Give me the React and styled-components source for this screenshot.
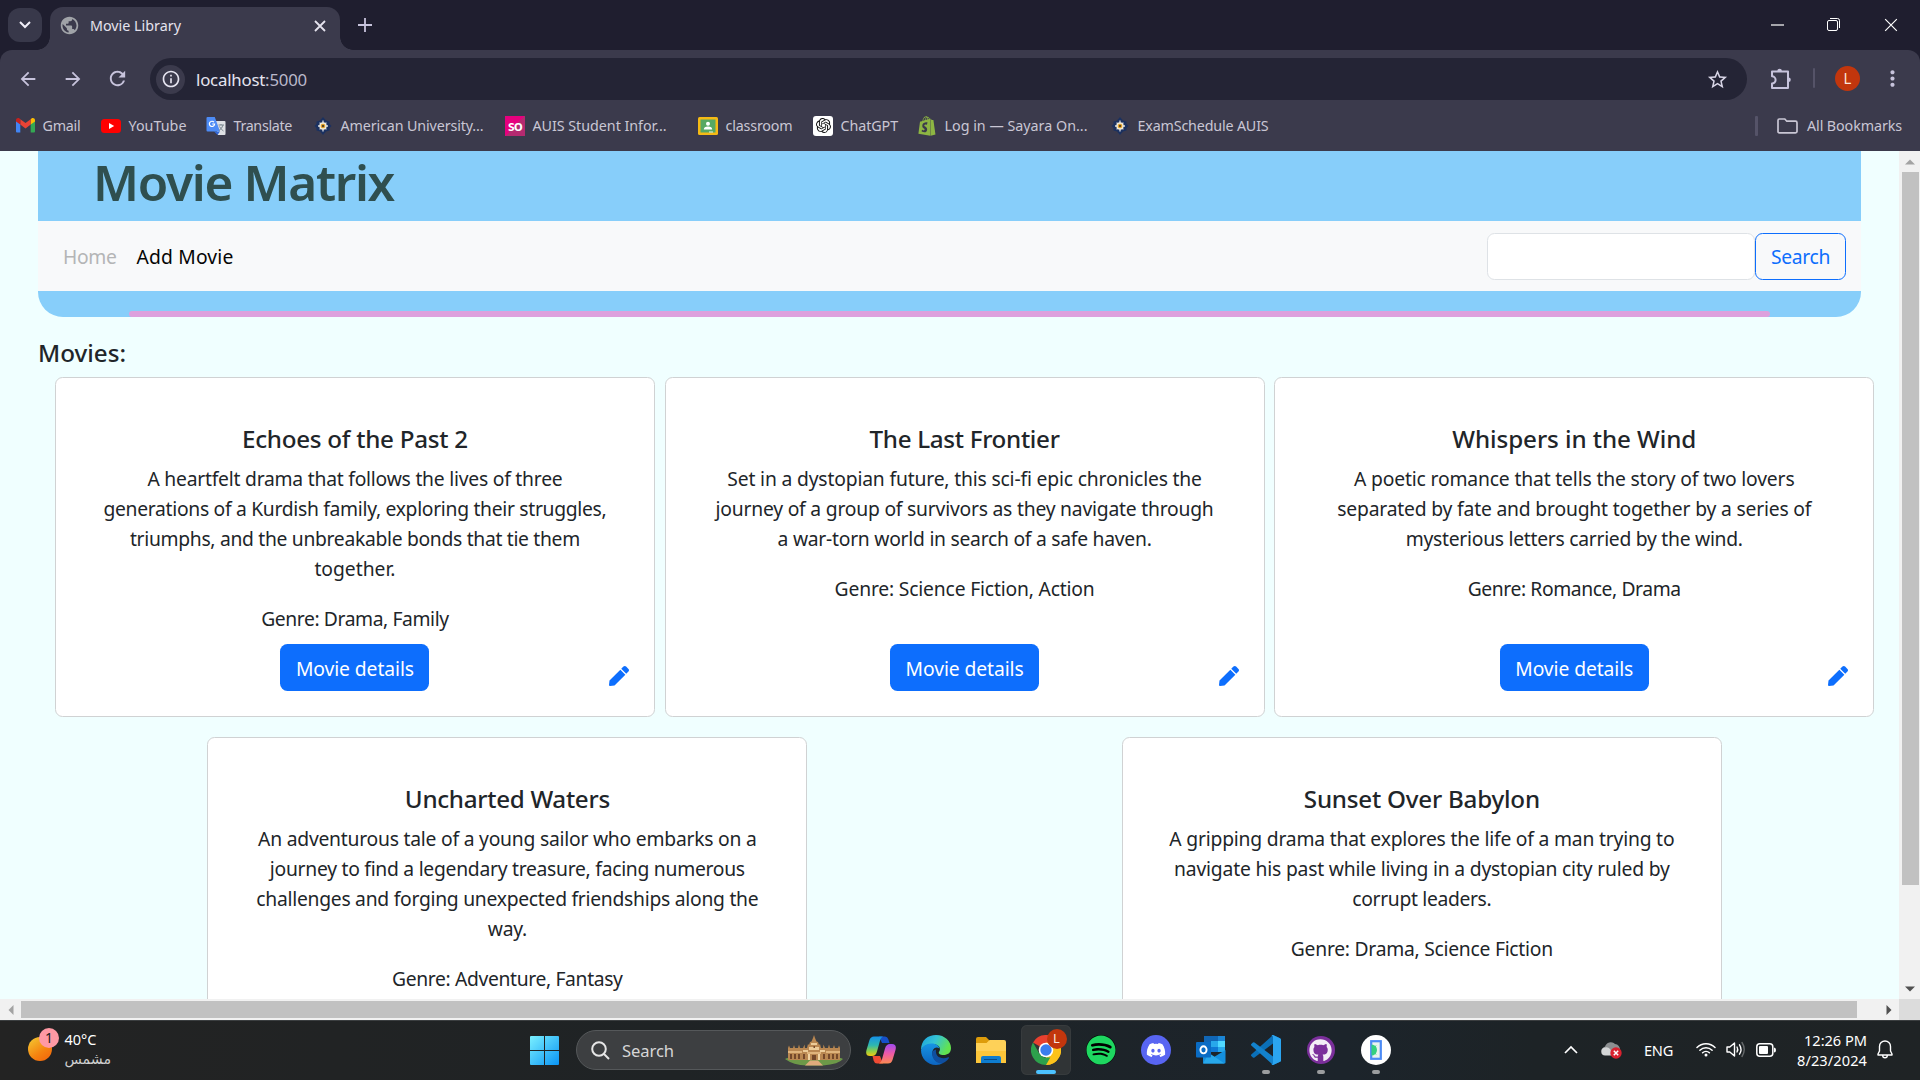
import React, { useLayoutEffect, useRef, useState } from 'react';
import styled, { createGlobalStyle } from 'styled-components';
import { FaPen, FaSpotify, FaDiscord, FaGithub, FaShopify } from 'react-icons/fa';
import { SiOpenai } from 'react-icons/si';
import {
  MdPublic, MdStarBorder, MdRefresh, MdArrowBack, MdArrowForward,
  MdInfoOutline, MdMoreVert,
} from 'react-icons/md';

const GlobalStyle = createGlobalStyle`
  *, *::before, *::after { box-sizing: border-box; }
  body { margin: 0; overflow: hidden; font-family: "Noto Sans", "Open Sans", sans-serif; }
  svg { display: block; flex: none; }
`;

/* Text tracked so that it spans a given width in pixels. */
const Tracked = styled.span`
  white-space: pre;
`;

function Text({ width, children }) {
  const ref = useRef(null);
  const [spacing, setSpacing] = useState(0);
  useLayoutEffect(() => {
    const el = ref.current;
    const range = document.createRange();
    range.selectNodeContents(el);
    el.style.letterSpacing = '0px';
    const natural = range.getBoundingClientRect().width;
    const next = (width - natural) / el.textContent.length;
    el.style.letterSpacing = `${next}px`;
    setSpacing(next);
  }, [width]);
  return <Tracked ref={ref} style={{ letterSpacing: `${spacing}px` }}>{children}</Tracked>;
}

const Screen = styled.div`
  display: flex;
  flex-direction: column;
  width: 1920px;
  height: 1080px;
  overflow: hidden;
`;

/* ---------- browser chrome ---------- */
const TabStrip = styled.div`
  display: flex;
  height: 50px;
  background: #1f1e2f;
`;
const TabSearch = styled.div`
  display: grid;
  place-items: center;
  width: 34px;
  height: 34px;
  margin: 8px 8px 0;
  border-radius: 12px;
  background: #38384a;
`;
const Tab = styled.div`
  position: relative;
  display: flex;
  align-items: center;
  width: 290px;
  height: 43px;
  margin-top: 7px;
  padding: 0 14px 6px 9px;
  border-radius: 13px 13px 0 0;
  background: #3b3a4c;
  color: #e5e3ee;
  font-size: 14.3px;
  &::before, &::after {
    content: "";
    position: absolute;
    bottom: 0;
    width: 13px;
    height: 13px;
  }
  &::before { left: -13px; background: radial-gradient(circle at 0 0, transparent 12.5px, #3b3a4c 13px); }
  &::after { right: -13px; background: radial-gradient(circle at 100% 0, transparent 12.5px, #3b3a4c 13px); }
`;
const TabTitle = styled.div`
  flex: 1;
  margin-left: 10px;
`;
const NewTab = styled.div`
  display: grid;
  place-items: center;
  width: 36px;
  margin-left: 7px;
`;
const WindowButtons = styled.div`
  display: flex;
  margin: 0 1px 0 auto;
`;
const WindowButton = styled.div`
  display: grid;
  place-items: center;
  width: ${p => p.$w || 57}px;
  height: 49px;
`;
const ToolbarBack = styled.div`
  background: #1f1e2f;
`;
const Toolbar = styled.div`
  display: flex;
  align-items: flex-start;
  height: 50px;
  padding: 8px 5px 0;
  border-radius: 12px 12px 0 0;
  background: #3b3a4c;
  color: #c7c3dc;
`;
const ToolSlot = styled.div`
  display: grid;
  place-items: center;
  width: 45px;
  height: 41px;
`;
const AddressBar = styled.div`
  display: flex;
  align-items: center;
  width: 1597px;
  height: 42px;
  margin: 0 11px 0 10px;
  padding: 0 18px 0 6px;
  border-radius: 21px;
  background: #242435;
  color: #e6e4f0;
  font-size: 16.8px;
`;
const SiteInfo = styled.div`
  display: grid;
  place-items: center;
  width: 29px;
  height: 29px;
  margin-right: 11px;
  border-radius: 50%;
  background: #3b3a4c;
`;
const Address = styled.div`
  flex: 1;
`;
const Port = styled.span`
  color: #bab8ca;
`;
const Rule = styled.div`
  width: ${p => p.$w || 2}px;
  height: 20px;
  margin: ${p => p.$m};
  border-radius: 1px;
  background: #555368;
`;
const Avatar = styled.div`
  display: grid;
  place-items: center;
  width: ${p => p.$size}px;
  height: ${p => p.$size}px;
  border-radius: 50%;
  background: #c2360d;
  color: #fbe5dd;
  font: ${p => p.$font}px Roboto, sans-serif;
`;
const BookmarksBar = styled.div`
  display: flex;
  align-items: center;
  height: 51px;
  padding: 0 18px 0 15px;
  background: #3b3a4c;
  color: #c9c6d4;
  font-size: 14.3px;
`;
const Bookmark = styled.div`
  display: flex;
  align-items: center;
  width: ${p => p.$w}px;
  gap: 7.5px;
`;
const BookmarkIcon = styled.div`
  display: grid;
  place-items: center;
  width: 20px;
  height: 20px;
`;
const ChatTile = styled.div`
  display: grid;
  place-items: center;
  width: 20px;
  height: 20px;
  border-radius: 3px;
  background: #fff;
  color: #111;
`;
const SoTile = styled.div`
  width: 20px;
  height: 20px;
  background: linear-gradient(135deg, #e6007e 50%, #b52a70 50%);
  color: #fff;
  font: 700 15px/18px Lato, sans-serif;
  letter-spacing: -0.5px;
  text-align: center;
`;
const AllBookmarks = styled.div`
  display: flex;
  align-items: center;
  gap: 9px;
  margin-left: auto;
`;

/* ---------- page ---------- */
const Viewport = styled.div`
  display: grid;
  grid-template: 848px 21px / 1899px 21px;
`;
const Page = styled.main`
  height: 848px;
  overflow: hidden;
  background: #f0ffff;
  color: #212529;
`;
const Banner = styled.header`
  display: flex;
  flex-direction: column;
  width: 1823px;
  height: 166px;
  margin-left: 38px;
  border-radius: 0 0 25px 25px;
  background: #87cefa;
`;
const SiteTitle = styled.h1`
  height: 70px;
  margin: 0;
  padding-left: 55px;
  color: #2f4f4f;
  font-size: 49.5px;
  font-weight: 600;
  line-height: 63px;
`;
const Nav = styled.nav`
  display: flex;
  align-items: center;
  height: 70px;
  padding: 0 15px 0 25px;
  background: #f8f9fa;
  font-size: 19.3px;
`;
const NavLink = styled.div`
  width: ${p => p.$w}px;
  color: ${p => (p.$muted ? '#b4b5b6' : '#050505')};
`;
const SearchInput = styled.div`
  width: 268px;
  height: 47px;
  margin-left: auto;
  border: 1px solid #dee2e6;
  border-radius: 7.5px;
  background: #fff;
`;
const SearchButton = styled.div`
  width: 91px;
  height: 47px;
  border: 1px solid #0d6efd;
  border-radius: 7.5px;
  color: #0d6efd;
  line-height: 46px;
  text-align: center;
`;
const PlumLine = styled.div`
  width: 1641px;
  height: 6px;
  margin: auto 91px 0;
  border-radius: 3px;
  background: #dda0dd;
`;
const SectionTitle = styled.h5`
  margin: 21px 0 9px 38px;
  font-size: 24.2px;
  font-weight: 500;
  line-height: 30px;
`;
const CardGrid = styled.section`
  display: flex;
  flex-wrap: wrap;
  justify-content: space-around;
  gap: 20px 0;
  width: 1829px;
  margin-left: 50.1px;
`;
const Card = styled.article`
  display: flex;
  flex-direction: column;
  width: 600px;
  height: 340px;
  padding: 46px 25px 25px;
  border: 1px solid #d0d2d3;
  border-radius: 7.5px;
  background: #fff;
  text-align: center;
`;
const CardTitle = styled.h5`
  margin: 0 0 10px;
  font-size: 24.2px;
  font-weight: 500;
  line-height: 30px;
`;
const Copy = styled.p`
  margin: 0;
  font-size: 19.3px;
  line-height: 30px;
`;
const Genre = styled(Copy)`
  margin-top: 20px;
`;
const Line = styled.span`
  display: block;
`;
const CardFooter = styled.div`
  display: grid;
  grid-template-columns: 1fr 149px 1fr;
  margin-top: auto;
`;
const DetailsButton = styled.div`
  grid-column: 2;
  height: 47px;
  border-radius: 7.5px;
  background: #0d6efd;
  color: #fff;
  font-size: 19.3px;
  line-height: 49px;
`;
const EditLink = styled.div`
  align-self: end;
  justify-self: end;
  margin-bottom: 5px;
  color: #0d6efd;
`;

/* ---------- scrollbars ---------- */
const VScroll = styled.div`
  display: flex;
  flex-direction: column;
  align-items: center;
  padding-left: 1px;
  background: #f1f1f1;
`;
const VThumb = styled.div`
  width: 17px;
  height: 713px;
  margin-bottom: auto;
  background: #c1c1c1;
`;
const HScroll = styled.div`
  display: flex;
  align-items: center;
  background: #f1f1f1;
`;
const HThumb = styled.div`
  width: 1836px;
  height: 17px;
  margin-right: auto;
  background: #c1c1c1;
`;
const ArrowSlot = styled.div`
  display: grid;
  place-items: center;
  width: 21px;
  height: 21px;
`;
const Corner = styled.div`
  background: #dcdcdc;
`;

/* ---------- taskbar ---------- */
const Taskbar = styled.footer`
  display: flex;
  height: 60px;
  border-top: 1px solid #3b3e40;
  background: linear-gradient(90deg, #232323, #1f2325 35%, #1c242b 70%, #1d2326 80%, #1f2325);
  color: #fff;
  font-size: 14.5px;
`;
const Weather = styled.div`
  display: flex;
  width: 530px;
  padding: 6px 0 0 28px;
`;
const Sun = styled.div`
  position: relative;
  width: 24px;
  height: 24px;
  margin: 10px 12.5px 0 0;
  border-radius: 50%;
  background: linear-gradient(145deg, #f3c02e 10%, #f5820f 60%, #f2600c);
`;
const Badge = styled.div`
  position: absolute;
  left: 11px;
  top: -9px;
  width: 20px;
  height: 20px;
  border-radius: 50%;
  background: #ff99a4;
  color: #1c1c1c;
  font-size: 14px;
  line-height: 20px;
  text-align: center;
`;
const WeatherText = styled.div`
  line-height: 20px;
  padding-top: 2px;
`;
const WeatherNote = styled.div`
  color: #cfcfcf;
  font-family: "DejaVu Sans", sans-serif;
  font-size: 14.2px;
`;
const SearchBox = styled.div`
  display: flex;
  align-items: center;
  width: 275px;
  height: 40px;
  margin: 9px 2px 0 17px;
  padding: 0 7px 0 14px;
  border: 1px solid #55585a;
  border-radius: 20px;
  background: #3d3f41;
  color: #d6d6d6;
  font-size: 16.6px;
`;
const SearchLabel = styled.div`
  flex: 1;
  margin-left: 12px;
`;
const StartIcon = styled.div`
  padding-top: 15px;
`;
const AppButton = styled.div`
  position: relative;
  display: grid;
  place-items: center;
  width: 50px;
  height: 50px;
  margin: 4px 2.5px 0;
  border-radius: 6px;
  background: ${p => (p.$active ? '#303436' : 'transparent')};
  box-shadow: ${p => (p.$active ? 'inset 0 0 0 1px #373b3d' : 'none')};
  &::after {
    content: "";
    position: absolute;
    bottom: 1px;
    left: 50%;
    width: ${p => (p.$active ? 20 : p.$open ? 8 : 0)}px;
    height: 4px;
    border-radius: 2px;
    transform: translateX(-50%);
    background: ${p => (p.$active ? '#4cc2ff' : '#9b9d9f')};
  }
`;
const AppBadge = styled.div`
  position: absolute;
  right: 4px;
  top: 4px;
`;
const Disc = styled.div`
  display: grid;
  place-items: center;
  width: ${p => p.$size || 30}px;
  height: ${p => p.$size || 30}px;
  border-radius: 50%;
  background: ${p => p.$bg};
  color: ${p => p.$fg};
`;
const Tray = styled.div`
  display: flex;
  align-items: center;
  margin-left: auto;
  padding: 0 27px 2px 0;
  font-size: 14.6px;
`;
const TrayItem = styled.div`
  display: flex;
  width: ${p => p.$w}px;
`;
const Clock = styled.div`
  width: 91px;
  line-height: 20px;
  text-align: right;
`;
const BellSlot = styled.div`
  margin-left: 10px;
`;

/* ---------- drawings ---------- */
const Cross = ({ size, w = 1.4, color = '#fff' }) => (
  <svg width={size} height={size} viewBox="0 0 12 12" fill="none" stroke={color} strokeWidth={w}><path d="M1 1l10 10M11 1L1 11" /></svg>
);
const Arrow = ({ turn, color }) => (
  <svg width="10" height="10" viewBox="0 0 10 10"><path d="M0 7.5h10L5 2.5z" fill={color} transform={`rotate(${turn} 5 5)`} /></svg>
);
const Puzzle = () => (
  <svg width="22" height="22" viewBox="0 0 22 22" fill="none" stroke="#c7c3dc" strokeWidth="2" strokeLinejoin="round">
    <path d="M2 3.500h16v16.500H2v-4.500a3.600 3.600 0 0 0 0-7.200z" />
    <path d="M7.300 3a2.300 2.300 0 0 1 4.600 0zM18.500 9.400a2.300 2.300 0 0 1 0 4.600z" fill="#c7c3dc" stroke="none" />
  </svg>
);
const Gmail = () => (
  <svg width="19" height="15" viewBox="0 0 19 15">
    <path d="M0 2.500V13.500q0 1 1 1H4.300V5.500z" fill="#4285f4" />
    <path d="M19 2.500V13.500q0 1-1 1H14.700V5.500z" fill="#34a853" />
    <path d="M14.700 1.200V6.600L19 3.400V2.200C19 .3 16.800-.5 15.500.6z" fill="#fbbc04" />
    <path d="M4.300 6.600V1.200L9.500 5.100l5.200-3.900v5.400L9.500 10.500z" fill="#ea4335" />
    <path d="M0 2.200v1.200l4.300 3.200V1.200L3.500.6C2.200-.5 0 .3 0 2.200z" fill="#c5221f" />
  </svg>
);
const YouTube = () => (
  <svg width="20" height="14" viewBox="0 0 20 14"><rect width="20" height="14" rx="3.500" fill="#f00" /><path d="M8 4v6l5.200-3z" fill="#fff" /></svg>
);
const Translate = () => (
  <svg width="20" height="20" viewBox="0 0 20 20">
    <path d="M8 5h10.500q1 0 1 1v12q0 1-1 1H12z" fill="#dfe1e5" />
    <path d="M8 15.500h6L11.500 19z" fill="#3367d6" />
    <path d="M1.500 1h7.300L14 15.500H1.500q-1 0-1-1V2q0-1 1-1z" fill="#4d8bf5" />
    <path d="M8 6.200A2.600 2.600 0 1 0 8.600 8H6.200" fill="none" stroke="#fff" strokeWidth="1.200" />
    <path d="M12.500 9h5.500M15 8v1M17 9q-.8 3.500-4 5.500M13.500 10.500q1.500 3 4 4.500" fill="none" stroke="#7b8790" strokeWidth="1" />
  </svg>
);
const Auis = () => (
  <svg width="18" height="18" viewBox="0 0 18 18">
    <path d="M9 0l3 3.500 3.500 1L15.500 7l2 2-2 2v2.500l-3.500 1L9 18l-3-3.500-3.500-1V11l-2-2 2-2V4.500l3.500-1z" fill="#1b3160" />
    <path d="M9 3.500v11M4 9h10M5.600 5.600l6.800 6.800M12.400 5.600l-6.800 6.800" stroke="#d9dbe2" strokeWidth="1.300" />
    <circle cx="9" cy="9" r="3.700" fill="#f1ead6" /><circle cx="9" cy="9" r="2.300" fill="#e0a02a" /><circle cx="9" cy="9" r="1" fill="#2b2b2b" />
  </svg>
);
const Classroom = () => (
  <svg width="20" height="18" viewBox="0 0 20 18">
    <rect width="20" height="18" rx="1.500" fill="#f5ba15" /><rect x="2.500" y="2.500" width="15" height="13" fill="#57a863" />
    <circle cx="10" cy="6.800" r="2" fill="#fff" /><path d="M5.800 12.500q0-3 4.200-3t4.200 3z" fill="#fff" /><path d="M11 15.500h4v-1h-4z" fill="#e8f2e8" />
  </svg>
);
const Folder = () => (
  <svg width="21" height="16" viewBox="0 0 21 16" fill="none" stroke="#c9c6d4" strokeWidth="1.700"><path d="M1 13.500V2.500Q1 1 2.300 1H7.800l2 2.200h8.700q1.500 0 1.500 1.500v8.800q0 1.300-1.500 1.300H2.300Q1 14.800 1 13.500z" /></svg>
);
const Windows = () => (
  <svg width="29" height="29" viewBox="0 0 29 29">
    <defs><linearGradient id="win" x1="0" y1="0" x2="29" y2="29" gradientUnits="userSpaceOnUse"><stop stopColor="#7af0ff" /><stop offset="1" stopColor="#0a94f5" /></linearGradient></defs>
    <path d="M1 0h13v14H0V1q0-1 1-1zM15 0h13q1 0 1 1v13H15zM0 15h14v14H1q-1 0-1-1zM15 15h14v13q0 1-1 1H15z" fill="url(#win)" />
  </svg>
);
const Palace = () => (
  <svg width="58" height="31" viewBox="0 0 58 31">
    <path d="M0 24q8 6 22 6.500h16Q54 29 58 24q-5-3-29-3T0 24z" fill="#6d9948" />
    <path d="M3 25V13l1-2.500 1 2.500h3l1-3 1 3h3l1-3.500 1 3.500h3l1.500-3.500L20 13h2l1-4 1 1 1-3 1.500-.5L28 3l1-3 1 3 1.500 3.500L33 7l1 3 1-1 1 4h2l.5-3.500L40 13h3l1-3.500 1 3.500h3l1-3 1 3h3l1-2.500 1 2.500v12z" fill="#b98751" />
    <path d="M24 12h10v3H24zM26 8h6v2h-6zM18 15h5v2h-5zM35 15h5v2h-5z" fill="#eccb98" />
    <path d="M3 16h14v2H3zM41 16h14v2H41zM22 17h14v2H22z" fill="#dfb47c" />
    <path d="M5 19h2v5H5zM9 19h2v5H9zM13 19h2v5h-2zM18 19h2v5h-2zM38 19h2v5h-2zM43 19h2v5h-2zM47 19h2v5h-2zM51 19h2v5h-2zM27 20h4v5h-4zM28.500 11h1.500v2h-1.500z" fill="#74482a" />
    <path d="M23 19h2v6h-2zM33 19h2v6h-2z" fill="#f0d3a2" />
    <path d="M20 30.500l5-5h8l5 5z" fill="#e0aa7c" />
  </svg>
);
const Copilot = () => (
  <svg width="30" height="28" viewBox="0 0 30 28">
    <defs>
      <linearGradient id="cpa" x1="0" y1="0" x2="0" y2="1"><stop stopColor="#1592e8" /><stop offset=".45" stopColor="#2eb7b0" /><stop offset=".75" stopColor="#8fcf46" /><stop offset="1" stopColor="#f2c811" /></linearGradient>
      <linearGradient id="cpb" x1="0" y1="0" x2="0" y2="1"><stop stopColor="#a14bf0" /><stop offset=".5" stopColor="#ee5aa5" /><stop offset="1" stopColor="#fb8a52" /></linearGradient>
    </defs>
    <path d="M13 .5h6q2.500 0 3.300 2.800L23.500 7H16z" fill="#1650c8" />
    <path d="M17 27.500H11q-2.500 0-3.300-2.800L6.500 20H14z" fill="#ee4b34" />
    <path d="M8 .5h9q-2 .8-2.800 3.500L11 15.500Q9.800 20 6 20H4q-5 0-3.500-6L3.500 4Q4.600.5 8 .5z" fill="url(#cpa)" />
    <path d="M22 27.500h-9q2-.8 2.800-3.500L19 12.500Q20.200 8 24 8h2q5 0 3.500 6l-3 10q-1.100 3.500-4.500 3.500z" fill="url(#cpb)" />
  </svg>
);
const Edge = () => (
  <svg width="30" height="30" viewBox="0 0 30 30">
    <defs>
      <linearGradient id="eda" x1="0" y1="0" x2="1" y2=".4"><stop stopColor="#1aa0e0" /><stop offset=".5" stopColor="#35c3d5" /><stop offset="1" stopColor="#62e34f" /></linearGradient>
      <linearGradient id="edb" x1="0" y1="0" x2="0" y2="1"><stop stopColor="#1794e4" /><stop offset="1" stopColor="#0c64c0" /></linearGradient>
    </defs>
    <path d="M0 15C0 5 7 0 15 0c9 0 15 6.500 15 13 0 5-3.500 7-7.500 7-3.500 0-5.500-1.500-4.500-3 3-4-1-8-6-8Q3 9 0 15z" fill="url(#eda)" />
    <path d="M0 15Q3 8 11 8.500c4 0 7 2.500 7.500 5-4-3-8 1-7 6 1 5.500 5 9 11 8Q19 30 15 30C6 30 0 23 0 15z" fill="url(#edb)" />
    <path d="M11.500 16c-2 6 3 12.500 9.500 12.500 3-1 5.500-3 7-5.500q.5-1-.7-.7C20 25 14 21.500 15 14.500z" fill="#0f4fa0" />
  </svg>
);
const Explorer = () => (
  <svg width="30" height="27" viewBox="0 0 30 27">
    <path d="M0 2q0-2 2-2h8l3 3v5H0z" fill="#dd9c0b" /><path d="M0 6h10.500L13.500 3H28q2 0 2 2v21H0z" fill="#fed158" />
    <path d="M0 14h30v12H0z" fill="#fcc63a" /><path d="M5 26v-5q0-2 2-2h16q2 0 2 2v5z" fill="#0e7dd0" /><path d="M8 22.500h13" stroke="#074c8a" />
  </svg>
);
const Chrome = () => (
  <svg width="30" height="30" viewBox="0 0 30 30">
    <path d="M15 15L2 7.500A15 15 0 0 1 28 7.500z" fill="#e8402f" />
    <path d="M15 15L28 7.500A15 15 0 0 1 15 30z" fill="#fcc21b" />
    <path d="M15 7.500h13A15 15 0 0 1 15 30l6.500-11.300z" fill="#fcc21b" />
    <path d="M2 7.500l6.500 11.300Q12 23 15 22.500h4.300L15 30A15 15 0 0 1 2 7.500z" fill="#2da14c" />
    <circle cx="15" cy="15" r="7.300" fill="#fff" /><circle cx="15" cy="15" r="5.700" fill="#3b7ded" />
  </svg>
);
const Outlook = () => (
  <svg width="30" height="28" viewBox="0 0 30 28">
    <path d="M8 0h20q1 0 1 1v14H8z" fill="#1066b5" /><path d="M15 5h7v6h-7z" fill="#28a8ea" /><path d="M22 0h7v6h-7z" fill="#1b85d4" /><path d="M22 5h7v6h-7z" fill="#50d9ff" /><path d="M15 11h7v5h-7z" fill="#0f78d4" /><path d="M22 11h7v5h-7z" fill="#28a8ea" />
    <path d="M7 15l11 6 11.500-7V26.500q0 1-1 1H8q-1 0-1-1z" fill="#1490df" /><path d="M7 27.500h21.500L13 17z" fill="#28a8ea" />
    <rect y="6" width="15" height="15.500" rx="1" fill="#0a6cc4" /><ellipse cx="7.500" cy="13.800" rx="3.100" ry="3.600" fill="none" stroke="#fff" strokeWidth="1.900" />
  </svg>
);
const VsCode = () => (
  <svg width="30" height="30" viewBox="0 0 30 30">
    <path d="M22 0L29 3.300q1 .5 1 1.500V10L22 8.500 3.500 22.500q-.8.600-1.600 0L.3 21q-.7-.8 0-1.600z" fill="#0b70b8" />
    <path d="M22 30l7-3.300q1-.5 1-1.500V20l-8 1.500L3.500 7.500q-.8-.6-1.600 0L.3 9q-.7.8 0 1.600z" fill="#1382cc" />
    <path d="M22 0L29 3.300q1 .5 1 1.500v20.400q0 1-1 1.500L22 30q-1 .2-1.500-.8 1.500.5 1.500-1.200V2Q22 .5 20.500.8 21-.2 22 0z" fill="#2ba5f0" />
  </svg>
);
const Device = () => (
  <svg width="12" height="20" viewBox="0 0 12 20"><rect x="1.200" y="1.200" width="9.600" height="17.600" fill="#e9f3ee" stroke="#4c8bf5" strokeWidth="2.200" /><path d="M1.500 4.500A5.500 5.500 0 0 1 1.500 15.500z" fill="#35d07f" /><path d="M6 5.500L4.500 7.500M6 14.500L4.500 12.500" stroke="#35d07f" /></svg>
);
const Cloud = () => (
  <svg width="22" height="18" viewBox="0 0 22 18">
    <path d="M5 14A4.500 4.500 0 0 1 4 5.500 6 6 0 0 1 14 3a5.500 5.500 0 0 1 5 6L14 14z" fill="#8c8f91" /><path d="M4.500 14.500A4 4 0 0 1 4 6.500q3-1 5 1.500l4 6.500z" fill="#d3d5d6" />
    <circle cx="15" cy="12" r="5.700" fill="#d9222f" /><path d="M12.800 9.800l4.400 4.400M17.200 9.800l-4.400 4.400" stroke="#fff" strokeWidth="1.500" />
  </svg>
);
const Wifi = () => (
  <svg width="20" height="15" viewBox="0 0 20 15" fill="none" stroke="#fff" strokeWidth="1.500" strokeLinecap="round">
    <path d="M1 5.500a12.500 12.500 0 0 1 18 0M3.900 8.200a8.800 8.800 0 0 1 12.200 0M6.600 10.800a5 5 0 0 1 6.800 0" /><circle cx="10" cy="13" r="1.500" fill="#fff" stroke="none" />
  </svg>
);
const Volume = () => (
  <svg width="20" height="17" viewBox="0 0 20 17" fill="none" stroke="#fff" strokeWidth="1.400" strokeLinecap="round" strokeLinejoin="round">
    <path d="M1 6v5h2.800L8.500 15V2L3.800 6z" /><path d="M11 6q1.500 2.500 0 5M13.500 3.800q3 4.700 0 9.400" /><path d="M16 1.500q4.500 7 0 14" stroke="#66696b" />
  </svg>
);
const Battery = () => (
  <svg width="20" height="14" viewBox="0 0 20 14"><rect x=".8" y=".8" width="16" height="12.400" rx="3" fill="none" stroke="#fff" strokeWidth="1.500" /><rect x="3" y="3" width="9" height="8" rx="1" fill="#fff" /><path d="M18 4.500q2 0 2 2.500t-2 2.500z" fill="#fff" /></svg>
);
const Bell = () => (
  <svg width="16" height="19" viewBox="0 0 16 19" fill="none" stroke="#fff" strokeWidth="1.400" strokeLinejoin="round"><path d="M8 1a5.500 5.500 0 0 0-5.500 5.500V11L1 14v1h14v-1l-1.500-3V6.500A5.500 5.500 0 0 0 8 1zM5.700 15.500a2.300 2.300 0 0 0 4.600 0" /></svg>
);

/* ---------- data ---------- */
const bookmarks = [
  { w: 86, icon: <Gmail />, text: 'Gmail', tw: 38 },
  { w: 105, icon: <YouTube />, text: 'YouTube', tw: 58 },
  { w: 107, icon: <Translate />, text: 'Translate', tw: 58.5 },
  { w: 192, icon: <Auis />, text: 'American University...', tw: 143 },
  { w: 193, icon: <SoTile>so</SoTile>, text: 'AUIS Student Infor...', tw: 134 },
  { w: 115, icon: <Classroom />, text: 'classroom', tw: 67 },
  { w: 104, icon: <ChatTile><SiOpenai size={15} /></ChatTile>, text: 'ChatGPT', tw: 57.5 },
  { w: 193, icon: <FaShopify size={20} color="#8db543" />, text: 'Log in — Sayara On...', tw: 143 },
  { w: 170, icon: <Auis />, text: 'ExamSchedule AUIS', tw: 131 },
];

const movies = [
  {
    title: ['Echoes of the Past 2', 226],
    lines: [
      ['A heartfelt drama that follows the lives of three', 415],
      ['generations of a Kurdish family, exploring their struggles,', 503],
      ['triumphs, and the unbreakable bonds that tie them', 450],
      ['together.', 81],
    ],
    genre: ['Genre: Drama, Family', 187.5],
  },
  {
    title: ['The Last Frontier', 190],
    lines: [
      ['Set in a dystopian future, this sci-fi epic chronicles the', 474.5],
      ['journey of a group of survivors as they navigate through', 498],
      ['a war-torn world in search of a safe haven.', 374],
    ],
    genre: ['Genre: Science Fiction, Action', 260],
  },
  {
    title: ['Whispers in the Wind', 244],
    lines: [
      ['A poetic romance that tells the story of two lovers', 440.5],
      ['separated by fate and brought together by a series of', 474],
      ['mysterious letters carried by the wind.', 337],
    ],
    genre: ['Genre: Romance, Drama', 213],
  },
  {
    title: ['Uncharted Waters', 205],
    lines: [
      ['An adventurous tale of a young sailor who embarks on a', 498.5],
      ['journey to find a legendary treasure, facing numerous', 475],
      ['challenges and forging unexpected friendships along the', 502],
      ['way.', 39],
    ],
    genre: ['Genre: Adventure, Fantasy', 230.5],
  },
  {
    title: ['Sunset Over Babylon', 236],
    lines: [
      ['A gripping drama that explores the life of a man trying to', 505],
      ['navigate his past while living in a dystopian city ruled by', 495.5],
      ['corrupt leaders.', 139],
    ],
    genre: ['Genre: Drama, Science Fiction', 262],
  },
];

function MovieCard({ title, lines, genre }) {
  return (
    <Card>
      <CardTitle><Text width={title[1]}>{title[0]}</Text></CardTitle>
      <Copy>{lines.map(([text, w]) => <Line key={text}><Text width={w}>{text}</Text></Line>)}</Copy>
      <Genre><Text width={genre[1]}>{genre[0]}</Text></Genre>
      <CardFooter>
        <DetailsButton><Text width={118}>Movie details</Text></DetailsButton>
        <EditLink><FaPen size={20} /></EditLink>
      </CardFooter>
    </Card>
  );
}

export default function App() {
  return (
    <Screen>
      <GlobalStyle />
      <TabStrip>
        <TabSearch>
          <svg width="12" height="8" viewBox="0 0 12 8" fill="none" stroke="#f0eef8" strokeWidth="2"><path d="M1 1l5 5 5-5" /></svg>
        </TabSearch>
        <Tab>
          <MdPublic size={21} color="#a0a3a8" />
          <TabTitle><Text width={91}>Movie Library</Text></TabTitle>
          <Cross size={12} w={1.800} color="#e5e3ee" />
        </Tab>
        <NewTab>
          <svg width="14" height="14" viewBox="0 0 14 14" stroke="#c7c3dc" strokeWidth="1.800"><path d="M7 0v14M0 7h14" /></svg>
        </NewTab>
        <WindowButtons>
          <WindowButton $w={55}><svg width="13" height="2"><path d="M0 1h13" stroke="#fff" strokeWidth="1.200" /></svg></WindowButton>
          <WindowButton>
            <svg width="13" height="13" viewBox="0 0 13 13" fill="none" stroke="#fff"><rect x=".5" y="2.500" width="10" height="10" rx="1.500" /><path d="M3 .5h7.500q2 0 2 2V10" /></svg>
          </WindowButton>
          <WindowButton><Cross size={14} w={1} /></WindowButton>
        </WindowButtons>
      </TabStrip>
      <ToolbarBack>
        <Toolbar>
          <ToolSlot><MdArrowBack size={22} /></ToolSlot>
          <ToolSlot><MdArrowForward size={22} /></ToolSlot>
          <ToolSlot><MdRefresh size={23} /></ToolSlot>
          <AddressBar>
            <SiteInfo><MdInfoOutline size={20} /></SiteInfo>
            <Address><Text width={111}>localhost<Port>:5000</Port></Text></Address>
            <MdStarBorder size={23} color="#d8d5e6" />
          </AddressBar>
          <ToolSlot><Puzzle /></ToolSlot>
          <Rule $m="10px 10px 0 10px" />
          <ToolSlot><Avatar $size={25} $font={14}>L</Avatar></ToolSlot>
          <ToolSlot><MdMoreVert size={25} /></ToolSlot>
        </Toolbar>
      </ToolbarBack>
      <BookmarksBar>
        {bookmarks.map(b => (
          <Bookmark key={b.text} $w={b.w}>
            <BookmarkIcon>{b.icon}</BookmarkIcon>
            <Text width={b.tw}>{b.text}</Text>
          </Bookmark>
        ))}
        <AllBookmarks>
          <Rule $w={3} $m="0 10px 0 0" />
          <Folder />
          <Text width={95}>All Bookmarks</Text>
        </AllBookmarks>
      </BookmarksBar>
      <Viewport>
        <Page>
          <Banner>
            <SiteTitle><Text width={301}>Movie Matrix</Text></SiteTitle>
            <Nav>
              <NavLink $w={73.5} $muted><Text width={53.5}>Home</Text></NavLink>
              <NavLink $w={120}><Text width={97}>Add Movie</Text></NavLink>
              <SearchInput />
              <SearchButton><Text width={59}>Search</Text></SearchButton>
            </Nav>
            <PlumLine />
          </Banner>
          <SectionTitle><Text width={88}>Movies:</Text></SectionTitle>
          <CardGrid>{movies.map(m => <MovieCard key={m.title[0]} {...m} />)}</CardGrid>
        </Page>
        <VScroll>
          <ArrowSlot><Arrow turn={0} color="#a3a3a3" /></ArrowSlot>
          <VThumb />
          <ArrowSlot><Arrow turn={180} color="#505050" /></ArrowSlot>
        </VScroll>
        <HScroll>
          <ArrowSlot><Arrow turn={-90} color="#a3a3a3" /></ArrowSlot>
          <HThumb />
          <ArrowSlot><Arrow turn={90} color="#505050" /></ArrowSlot>
        </HScroll>
        <Corner />
      </Viewport>
      <Taskbar>
        <Weather>
          <Sun><Badge>1</Badge></Sun>
          <WeatherText>
            <div><Text width={32}>40°C</Text></div>
            <WeatherNote>مشمس</WeatherNote>
          </WeatherText>
        </Weather>
        <StartIcon><Windows /></StartIcon>
        <SearchBox>
          <svg width="19" height="19" viewBox="0 0 19 19" fill="none" stroke="#e6e6e6" strokeWidth="2"><circle cx="8" cy="8" r="6.800" /><path d="M13 13l5 5" /></svg>
          <SearchLabel><Text width={52}>Search</Text></SearchLabel>
          <Palace />
        </SearchBox>
        <AppButton><Copilot /></AppButton>
        <AppButton><Edge /></AppButton>
        <AppButton><Explorer /></AppButton>
        <AppButton $active><Chrome /><AppBadge><Avatar $size={20} $font={12}>L</Avatar></AppBadge></AppButton>
        <AppButton><Disc $bg="#000" $fg="#1ed760"><FaSpotify size={30} /></Disc></AppButton>
        <AppButton><Disc $bg="#5865f2" $fg="#fff"><FaDiscord size={20} /></Disc></AppButton>
        <AppButton><Outlook /></AppButton>
        <AppButton $open><VsCode /></AppButton>
        <AppButton $open><Disc $size={28} $bg="#7b2f9b" $fg="#f3eef6"><FaGithub size={23} /></Disc></AppButton>
        <AppButton $open><Disc $bg="#fff"><Device /></Disc></AppButton>
        <Tray>
          <TrayItem $w={37}><svg width="14" height="9" viewBox="0 0 14 9" fill="none" stroke="#fff" strokeWidth="1.700"><path d="M1 8l6-6 6 6" /></svg></TrayItem>
          <TrayItem $w={43}><Cloud /></TrayItem>
          <TrayItem $w={52}><Text width={29}>ENG</Text></TrayItem>
          <TrayItem $w={30}><Wifi /></TrayItem>
          <TrayItem $w={30}><Volume /></TrayItem>
          <TrayItem $w={20}><Battery /></TrayItem>
          <Clock>
            <div><Text width={63}>12:26 PM</Text></div>
            <div><Text width={70}>8/23/2024</Text></div>
          </Clock>
          <BellSlot><Bell /></BellSlot>
        </Tray>
      </Taskbar>
    </Screen>
  );
}
